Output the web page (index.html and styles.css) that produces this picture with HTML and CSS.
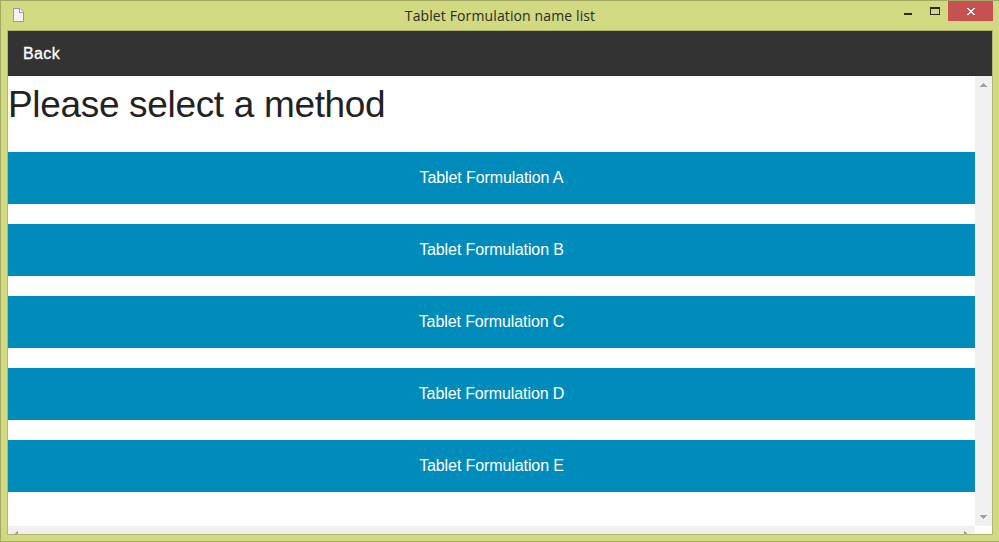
FILE: index.html
```html
<!DOCTYPE html>
<html lang="en">
<head>
<meta charset="utf-8">
<title>Tablet Formulation name list</title>
<link rel="stylesheet" href="styles.css">
</head>
<body>
<div class="window">
  <header class="titlebar">
    <svg class="doc-icon" width="11" height="14" viewBox="0 0 11 14"><path d="M.5.5H7L10.500 4V13.500H.5Z" fill="#f4f4f4" stroke="#999"/><path d="M6.500.5V4.500H10.500" fill="#fff" stroke="#999"/></svg>
    <h1 class="title">Tablet Formulation name list</h1>
    <div class="controls">
      <svg width="92" height="20" viewBox="0 0 92 20" shape-rendering="crispEdges"><path d="M3 12h8v2H3z" fill="#2b2b2b"/><path d="M29 6h10v8H29zM30 8v5h8V8z" fill="#2b2b2b" fill-rule="evenodd"/><path d="M47 0h45v20H47z" fill="#c75050"/><path d="M66 7h2v1h1v1h2V8h1V7h2v1h-1v1h-1v1h-1v1h1v1h1v1h1v1h-2v-1h-1v-1h-2v1h-1v1h-2v-1h1v-1h1v-1h1v-1h-1V9h-1V8h-1z" fill="#fff"/></svg>
    </div>
  </header>
  <div class="client">
    <nav class="navbar"><a class="back">Back</a></nav>
    <div class="viewport">
      <main class="page">
        <h2 class="heading">Please select a method</h2>
        <div class="methods">
          <button class="method">Tablet Formulation A</button>
          <button class="method">Tablet Formulation B</button>
          <button class="method">Tablet Formulation C</button>
          <button class="method">Tablet Formulation D</button>
          <button class="method">Tablet Formulation E</button>
        </div>
      </main>
      <div class="vscroll">
        <svg width="7" height="4" viewBox="0 0 7 4" shape-rendering="crispEdges"><path d="M3 0h1v1h1v1h1v1h1v1H0V3h1V2h1V1h1z" fill="#a0a0a0"/></svg>
        <svg width="7" height="4" viewBox="0 0 7 4" shape-rendering="crispEdges"><path d="M0 0h7v1H6v1H5v1H4v1H3V3H2V2H1V1H0z" fill="#a0a0a0"/></svg>
      </div>
      <div class="hscroll">
        <svg width="3" height="3" viewBox="0 0 3 3" shape-rendering="crispEdges"><path d="M2 0h1v3H0V2h1V1h1z" fill="#a0a0a0"/></svg>
        <svg width="3" height="3" viewBox="0 0 3 3" shape-rendering="crispEdges"><path d="M0 0h1v1h1v1h1v1H0z" fill="#a0a0a0"/></svg>
      </div>
    </div>
  </div>
</div>
</body>
</html>
```
FILE: styles.css
```css
* { box-sizing: border-box; }
body { margin: 0; font-family: "Liberation Sans", Arial, sans-serif; }
.window {
  width: 999px;
  height: 542px;
  display: flex;
  flex-direction: column;
  padding: 0 6px 6px;
  background: #d1d981;
  border: 1px solid #a3a965;
  border-right: 0;
}
.titlebar {
  height: 29px;
  display: grid;
  grid-template-columns: 92px 1fr 92px;
}
.doc-icon { margin: 7px 0 0 6px; }
.title {
  margin: 0;
  font: 400 14px/29px "Open Sans", "Noto Sans", sans-serif;
  letter-spacing: 0.12px;
  text-align: center;
  color: #2b2b2b;
}
.controls { height: 20px; }
.controls svg { display: block; }
.client {
  flex: 1;
  display: flex;
  flex-direction: column;
  border: 1px solid #b1b76f;
}
.navbar {
  height: 45px;
  padding-left: 15px;
  background: #333;
  border-bottom: 1px solid #2d282b;
}
.back {
  font-size: 16px;
  line-height: 45px;
  letter-spacing: 0.4px;
  color: #fff;
  -webkit-text-stroke: 0.3px #fff;
}
.viewport {
  flex: 1;
  display: grid;
  grid-template-columns: 1fr 17px;
  grid-template-rows: 450px 8px;
  background: #fff;
}
.heading {
  margin: 0;
  height: 76px;
  font-size: 37px;
  font-weight: 400;
  line-height: 58px;
  letter-spacing: -0.33px;
  color: #222;
}
.methods { display: flex; flex-direction: column; gap: 20px; }
.method {
  height: 52px;
  padding: 0;
  border: 0;
  background: #008cba;
  color: #fff;
  font: 400 16px/52px "Liberation Sans", Arial, sans-serif;
  letter-spacing: -0.1px;
}
.vscroll {
  display: flex;
  flex-direction: column;
  justify-content: space-between;
  align-items: center;
  padding: 7px 0;
  background: #f0f0f0;
}
.hscroll {
  display: flex;
  justify-content: space-between;
  align-items: flex-end;
  padding: 0 8px 0 7px;
  background: #f0f0f0;
}
```
